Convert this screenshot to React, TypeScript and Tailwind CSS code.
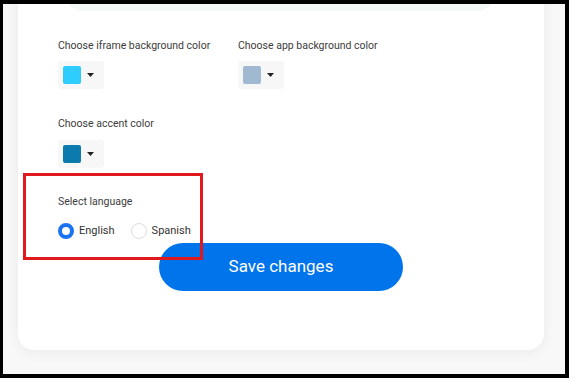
import React from "react";

function Picker({ color }: { color: string }) {
  return (
    <div className="flex items-center w-[46px] h-[28px] bg-[#f7f7f7] rounded-[3px] pl-[5px]">
      <div className="w-[18px] h-[18px] rounded-[2px]" style={{ backgroundColor: color }} />
      <svg width="7" height="4" viewBox="0 0 7 4" className="ml-[6px]">
        <path d="M0 0 L7 0 L3.5 4 Z" fill="#222" />
      </svg>
    </div>
  );
}

export default function App() {
  return (
    <div className="w-[569px] h-[378px] bg-black pt-[4px] pl-[3px] pr-[4px] pb-[4px]" style={{ fontFamily: "Roboto, 'Liberation Sans', sans-serif" }}>
      <div className="relative w-full h-full bg-[#f8f8f8] overflow-hidden">
        <div className="relative ml-[15px] mr-[21px] -mt-[30px] bg-white rounded-[16px] shadow-[0_2px_14px_rgba(0,0,0,0.06)] pl-[40px] pb-[59px]">
          <div className="ml-[7px] w-[430px] h-[37px] bg-[#f4f8f9] rounded-b-[18px]" />
          <div className="flex mt-[28px]">
            <div className="w-[180px]">
              <div className="text-[10.5px] leading-[14px] text-[#3c3c3c]">Choose iframe background color</div>
              <div className="mt-[8px]"><Picker color="#2ecdfd" /></div>
            </div>
            <div>
              <div className="text-[10.5px] leading-[14px] text-[#3c3c3c]">Choose app background color</div>
              <div className="mt-[8px]"><Picker color="#a1b8d1" /></div>
            </div>
          </div>
          <div className="mt-[28px] text-[10.5px] leading-[14px] text-[#3c3c3c]">Choose accent color</div>
          <div className="mt-[9px]"><Picker color="#0b7aad" /></div>
          <div className="mt-[27px] text-[10.5px] leading-[14px] text-[#3c3c3c]">Select language</div>
          <div className="mt-[14px] flex items-center h-[16px] text-[11px] text-[#333]">
            <div className="w-[16px] h-[16px] rounded-full border-[4px] border-[#1a73f0] bg-white" />
            <span className="ml-[5px]">English</span>
            <div className="ml-[16px] w-[16px] h-[16px] rounded-full border border-[#dcdcdc] bg-white" />
            <span className="ml-[5px]">Spanish</span>
          </div>
          <div className="flex justify-center -ml-[40px] mt-[4px]">
            <button className="w-[244px] h-[48px] rounded-full bg-[#0074eb] text-white text-[17px]">Save changes</button>
          </div>
        </div>
        <div className="absolute left-[20px] top-[169px] w-[180px] h-[87px] border-[3px] border-[#e0191f]" />
      </div>
    </div>
  );
}
